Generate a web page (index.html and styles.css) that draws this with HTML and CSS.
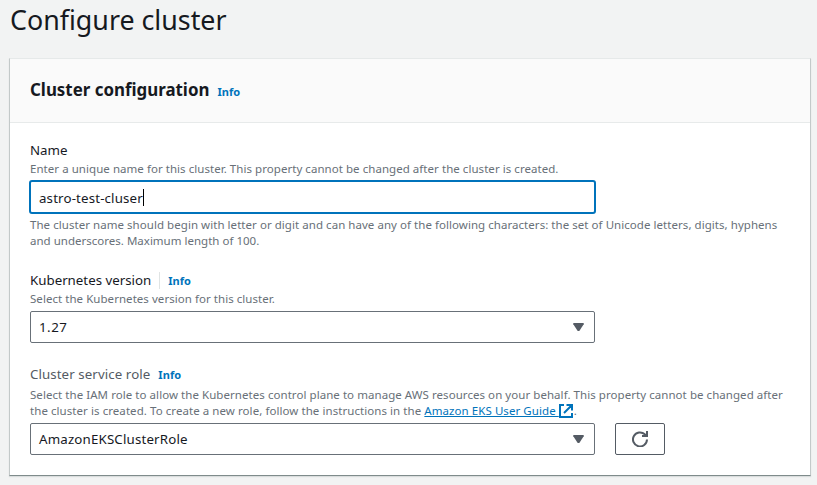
FILE: index.html
```html
<!DOCTYPE html>
<html lang="en">
<head>
<meta charset="utf-8">
<title>Configure cluster</title>
<link rel="stylesheet" href="styles.css">
</head>
<body>
<main>
  <h1>Configure cluster</h1>
  <section class="card">
    <header class="card-header">
      <h2>Cluster configuration</h2>
      <a class="info">Info</a>
    </header>
    <div class="card-body">
      <div class="field">
        <div class="label-row"><span class="label">Name</span></div>
        <p class="hint hint-name">Enter a unique name for this cluster. This property cannot be changed after the cluster is created.</p>
        <div class="control focused"><span class="value-name">astro-test-cluser</span><i class="caret"></i></div>
        <p class="hint constraint"><span class="line-a">The cluster name should begin with letter or digit and can have any of the following characters: the set of Unicode letters, digits, hyphens</span><br><span class="line-b">and underscores. Maximum length of 100.</span></p>
      </div>
      <div class="field field-version">
        <div class="label-row"><span class="label">Kubernetes version</span><i class="divider"></i><a class="info">Info</a></div>
        <p class="hint hint-version">Select the Kubernetes version for this cluster.</p>
        <div class="control"><span class="value-version">1.27</span><svg class="arrow" viewBox="0 0 11 8"><path d="M.3 0h10.4v1.2L6.3 8H4.7L.3 1.2z"/></svg></div>
      </div>
      <div class="field field-role">
        <div class="label-row"><span class="label label-role">Cluster service role</span><a class="info">Info</a></div>
        <p class="hint hint-role"><span class="line-c">Select the IAM role to allow the Kubernetes control plane to manage AWS resources on your behalf. This property cannot be changed after</span><br><span class="line-d">the cluster is created. To create a new role, follow the instructions in the <a class="link">Amazon EKS User Guide </a></span><svg class="external" viewBox="0 0 16 16"><path d="M6 2H2v12h12v-4M8.5 2H14v5.5M14 2L6 10"/></svg>.</p>
        <div class="control-row">
          <div class="control"><span class="value-role">AmazonEKSClusterRole</span><svg class="arrow" viewBox="0 0 11 8"><path d="M.3 0h10.4v1.2L6.3 8H4.7L.3 1.2z"/></svg></div>
          <button class="refresh" aria-label="Refresh"><svg viewBox="0 0 16 16"><path d="M15 8.5a7 7 0 1 1-2.2-5.2L15 5M15 0v5h-5"/></svg></button>
        </div>
      </div>
    </div>
  </section>
</main>
</body>
</html>
```
FILE: styles.css
```css
* { box-sizing: border-box; }
body {
  margin: 0;
  height: 485px;
  overflow: hidden;
  background: #f2f3f3;
  color: #16191f;
  font: 13.3px/22px "Noto Sans", sans-serif;
}
main { padding: 0 6px 0 9px; }
h1, h2, p { margin: 0; white-space: nowrap; }
h1 { height: 58px; padding-left: 1px; font-size: 26.8px; font-weight: 400; line-height: 40px; }
.card {
  height: 418px;
  background: #fff;
  border: 1px solid #c3c9c9;
  border-top-color: #e6e9e9;
  border-bottom-color: #7f8b8b;
  width: 802px;
  box-shadow: 0 1px 1px #d9dddd;
}
.card-header {
  display: flex;
  align-items: baseline;
  height: 64px;
  padding: 18px 20px 0;
  gap: 8px;
  background: #fafafa;
  border-bottom: 1px solid #e7eaea;
}
h2 { font-size: 16.9px; font-weight: 700; line-height: 25px; }
.info { color: #0073bb; font-size: 11px; font-weight: 700; line-height: 20px; letter-spacing: 0.05px; }
.card-body { padding: 16px 20px 0; }
.field-version { margin-top: 20px; }
.field-role { margin-top: 20px; }
.label-row { display: flex; align-items: baseline; height: 22px; white-space: nowrap; }
.label-role { color: #545b64; margin-right: 8px; letter-spacing: 0.08px; }
.divider { align-self: center; width: 1px; height: 17px; margin: 0 8px; background: #e0e4e4; }
.hint { color: #687078; font-size: 11.5px; line-height: 16px; letter-spacing: 0.048px; }
.hint-role { padding-top: 2px; }
.line-b { letter-spacing: 0.01px; }
.line-c { letter-spacing: 0.055px; }
.line-d { letter-spacing: 0.065px; }
.control {
  display: flex;
  align-items: center;
  width: 565px;
  height: 32px;
  margin-top: 4px;
  padding: 0 10px 0 9px;
  border: 1px solid #687078;
  border-radius: 2px;
  background: #fff;
}
.focused { width: 567px; height: 34px; margin: 3px 0 0 -1px; padding: 2px 8px 0; border: 2px solid #0073bb; border-radius: 3px; }
.value-name { letter-spacing: 0.15px; }
.value-version, .value-role { margin-left: -1px; }
.value-version { letter-spacing: 0.5px; }
.value-role { letter-spacing: 0.17px; }
.caret { width: 1px; height: 17px; margin-top: -2px; background: #000; }
.constraint { margin-top: 3px; }
.arrow { width: 11px; height: 8px; margin-left: auto; fill: #545b64; }
.link { color: #0073bb; text-decoration: underline; }
.external { width: 16px; height: 16px; margin-left: -1px; vertical-align: -4px; fill: none; stroke: #0073bb; stroke-width: 2; }
.control-row { display: flex; gap: 20px; }
.refresh {
  display: flex;
  align-items: center;
  justify-content: center;
  width: 50px;
  height: 32px;
  margin-top: 4px;
  padding: 0;
  background: #fff;
  border: 1px solid #545b64;
  border-radius: 2px;
}
.refresh svg { width: 16px; height: 16px; fill: none; stroke: #545b64; stroke-width: 2; }
```
